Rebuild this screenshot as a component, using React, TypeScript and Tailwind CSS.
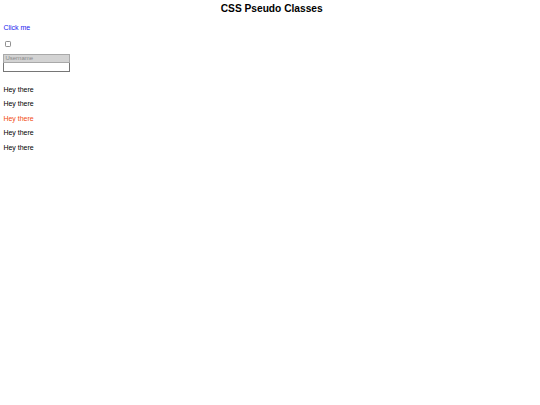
import React from 'react';

const lines = ['Hey there', 'Hey there', 'Hey there', 'Hey there', 'Hey there'];

export default function App() {
  return (
    <div className="min-h-[405px] bg-white pl-[3.4px] font-['Liberation_Sans',Arial,sans-serif] text-[7px] leading-[8px] text-black">
      {/* heading */}
      <h1 className="pt-[3px] text-center text-[10.2px] font-bold leading-[12px]">CSS Pseudo Classes</h1>

      {/* link */}
      <a href="#" className="mt-[9px] block w-max text-[#1a1aee]">
        Click me
      </a>

      {/* checkbox */}
      <div className="mt-[8.5px] flex h-[6px] pl-[1.6px]">
        <span className="block h-[6px] w-[6px] rounded-[1.2px] border-[0.8px] border-[#8f8f8f] bg-white" />
      </div>

      {/* inputs */}
      <div className="mt-[7.5px] flex w-[67px] flex-col">
        <div className="flex h-[9px] items-center border-[0.8px] border-[#a9a9a9] bg-[#d3d3d3] px-[1px] text-[6px] leading-[7px] text-[#8a8a8a]">
          Username
        </div>
        <div className="h-[9px] border-[0.8px] border-t-0 border-[#767676] bg-white" />
      </div>

      {/* paragraphs */}
      <div className="mt-[14px] flex flex-col gap-[6.4px]">
        {lines.map((t, i) => (
          <p key={i} className={i === 2 ? 'text-[#f24a12]' : ''}>
            {t}
          </p>
        ))}
      </div>
    </div>
  );
}
